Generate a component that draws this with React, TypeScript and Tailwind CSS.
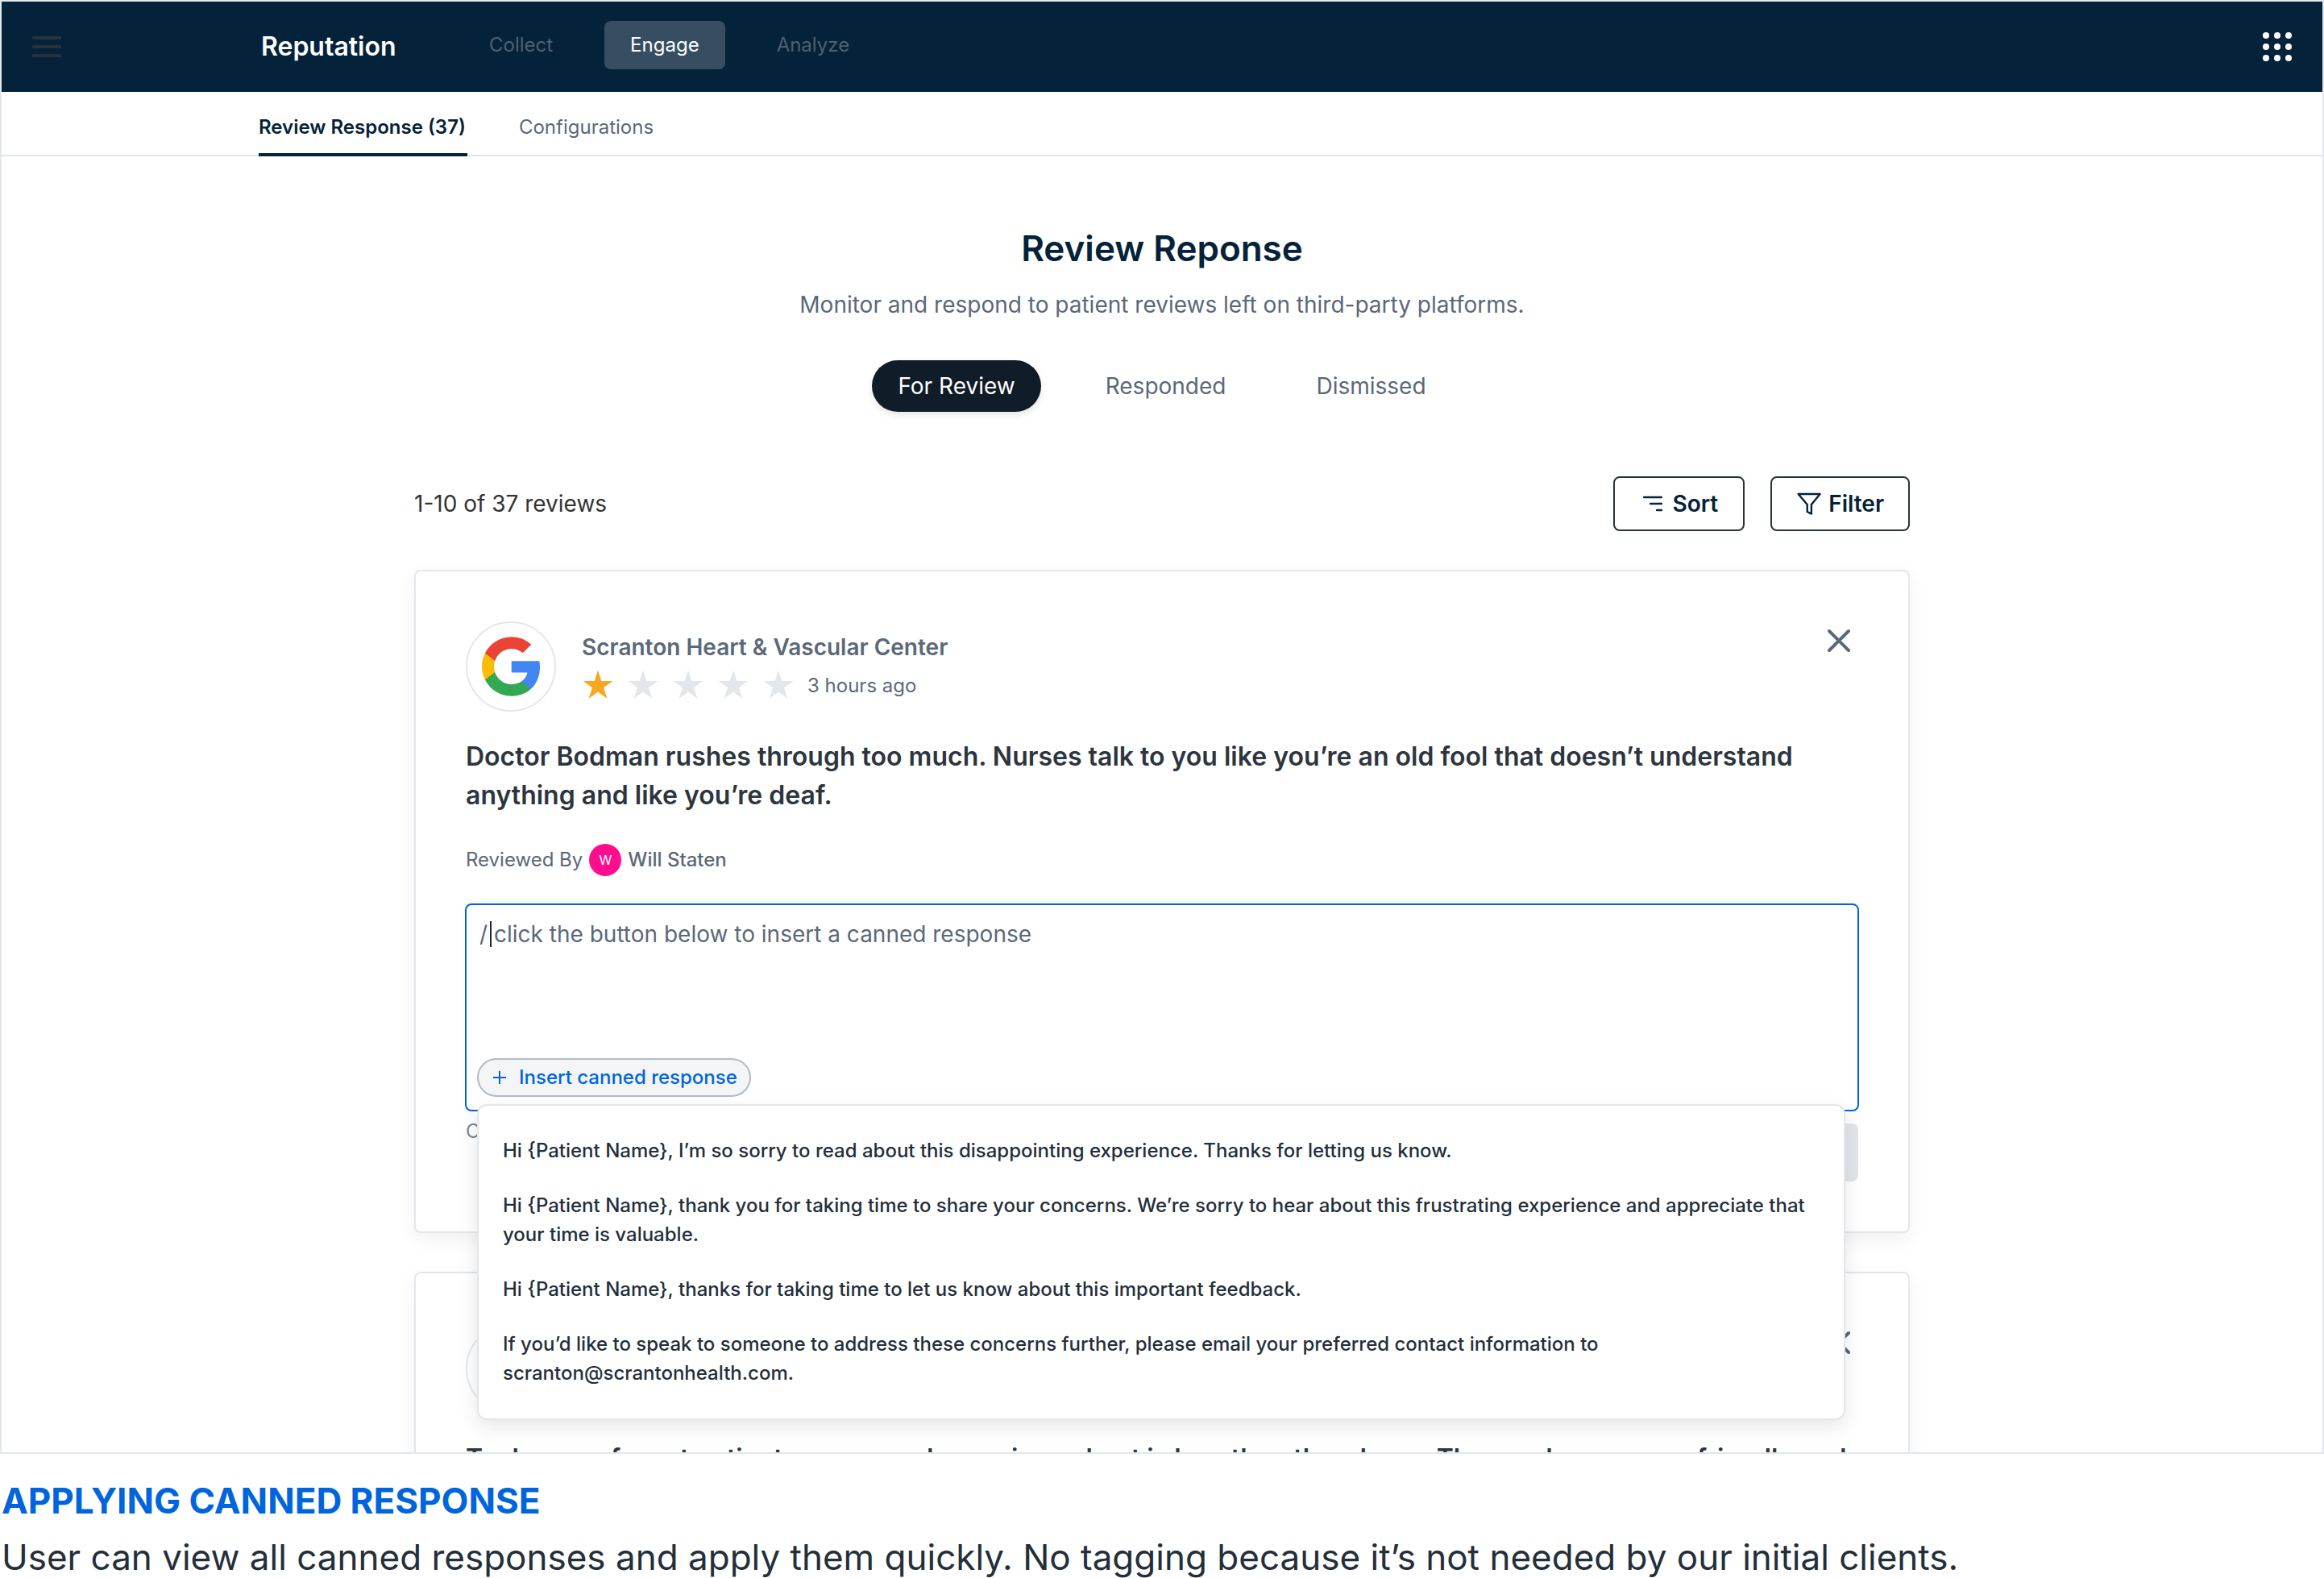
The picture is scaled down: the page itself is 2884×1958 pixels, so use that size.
import React from "react";

const cannedResponses = [
  "Hi {Patient Name}, I’m so sorry to read about this disappointing experience. Thanks for letting us know.",
  "Hi {Patient Name}, thank you for taking time to share your concerns. We’re sorry to hear about this frustrating experience and appreciate that your time is valuable.",
  "Hi {Patient Name}, thanks for taking time to let us know about this important feedback.",
  "If you’d like to speak to someone to address these concerns further, please email your preferred contact information to scranton@scrantonhealth.com.",
];

function Star({ filled }: { filled: boolean }) {
  return (
    <svg viewBox="0 0 40 40" className={filled ? "h-10 w-10 text-[#f6a723]" : "h-10 w-10 text-[#e3e7ec]"} fill="currentColor" aria-hidden="true">
      <polygon points="20,.6 24.36,14 38.45,14 27.05,22.3 31.4,35.7 20,27.4 8.6,35.7 12.95,22.3 1.55,14 15.64,14" />
    </svg>
  );
}

function GoogleLogo() {
  return (
    <svg viewBox="1 1 21.56 22" className="h-[74px] w-[72px]" role="img" aria-label="Google">
      <path fill="#4285f4" d="M22.56 12.25c0-.78-.07-1.53-.2-2.25H12v4.26h5.92c-.26 1.37-1.04 2.53-2.21 3.31v2.77h3.57c2.08-1.92 3.28-4.74 3.28-8.09z" />
      <path fill="#34a853" d="M12 23c2.97 0 5.46-.98 7.28-2.66l-3.57-2.77c-.98.66-2.23 1.06-3.71 1.06-2.86 0-5.29-1.93-6.16-4.53H2.18v2.84C3.99 20.53 7.7 23 12 23z" />
      <path fill="#fbbc05" d="M5.84 14.09c-.22-.66-.35-1.36-.35-2.09s.13-1.43.35-2.09V7.07H2.18C1.43 8.55 1 10.22 1 12s.43 3.45 1.18 4.93l2.85-2.22.81-.62z" />
      <path fill="#ea4335" d="M12 5.38c1.62 0 3.06.56 4.21 1.64l3.15-3.15C17.45 2.09 14.97 1 12 1 7.7 1 3.99 3.47 2.18 7.07l3.66 2.84c.87-2.6 3.3-4.53 6.16-4.53z" />
    </svg>
  );
}

function ReviewCard({ stars, text, children }: { stars: number; text: string; children?: React.ReactNode }) {
  return (
    <article className="mt-12 rounded-lg border-2 border-[#e3e7eb] bg-white p-[62px] shadow-[0_8px_24px_rgba(0,0,0,0.06)]">
      <header className="flex items-start justify-between">
        <div className="flex items-center gap-8">
          <div className="flex h-28 w-28 items-center justify-center rounded-full border-2 border-[#e3e7ec]">
            <GoogleLogo />
          </div>
          <div>
            <h2 className="text-[28px] leading-10 font-semibold text-[#5b6878]">Scranton Heart &amp; Vascular Center</h2>
            <div className="mt-2 flex items-center gap-4">
              {[1, 2, 3, 4, 5].map((n) => (
                <Star key={n} filled={n <= stars} />
              ))}
              <span className="text-2xl leading-10 text-[#5b6878]">3 hours ago</span>
            </div>
          </div>
        </div>
        <button type="button" aria-label="Dismiss review" className="mt-2 mr-2">
          <svg viewBox="0 0 32 32" className="h-8 w-8 text-[#5b6878]" fill="none" stroke="currentColor" strokeWidth="4" strokeLinecap="round">
            <path d="M4 4L28 28M28 4L4 28" />
          </svg>
        </button>
      </header>
      <p className="mt-8 text-[32px] leading-[48px] font-semibold text-[#2d353e]">{text}</p>
      {children}
    </article>
  );
}

export default function App() {
  return (
    <div className="flex h-screen flex-col bg-white font-[Inter,sans-serif]">
      <div className="min-h-0 flex-1 overflow-hidden border-2 border-[#e3e7eb]">
        <header className="flex h-28 items-center bg-[#042239] px-[38px]">
          <button type="button" aria-label="Menu">
            <svg viewBox="0 0 36 36" className="h-9 w-9 text-[#28323c]" fill="currentColor">
              <rect y="5" width="36" height="4" rx="1" />
              <rect y="16" width="36" height="4" rx="1" />
              <rect y="27" width="36" height="4" rx="1" />
            </svg>
          </button>
          <div className="ml-[248px] w-[251px] text-[32px] leading-[48px] font-semibold text-white">Reputation</div>
          <nav className="flex gap-8 self-start pt-6 text-2xl leading-[60px] text-[#4f6072]">
            <a href="#collect" className="px-8">Collect</a>
            <a href="#engage" className="rounded-lg bg-[#374e62] px-8 text-white">Engage</a>
            <a href="#analyze" className="px-8">Analyze</a>
          </nav>
          <button type="button" aria-label="Apps" className="ml-auto">
            <svg viewBox="0 0 36 36" className="h-9 w-9" fill="#fff">
              {[4, 18, 32].map((y) => [4, 18, 32].map((x) => <circle key={`${x}-${y}`} cx={x} cy={y} r="4" />))}
            </svg>
          </button>
        </header>

        <nav className="flex h-20 gap-16 border-b-2 border-[#e3e7eb] pl-[319px] text-2xl">
          <a href="#review-response" className="-mb-0.5 flex items-center border-b-4 border-[#042239] pt-3 pr-0.5 font-semibold text-[#042239]">
            Review Response (37)
          </a>
          <a href="#configurations" className="-mb-0.5 flex items-center border-b-4 border-transparent pt-3 text-[#5b6878]">
            Configurations
          </a>
        </nav>

        <main className="mx-auto w-full max-w-[1856px] pt-[86px]">
          <h1 className="text-center text-[44px] leading-[56px] font-semibold text-[#042239]">Review Reponse</h1>
          <p className="mt-[22px] text-center text-[28px] leading-10 text-[#5b6878]">
            Monitor and respond to patient reviews left on third-party platforms.
          </p>
          <div className="mt-[49px] flex justify-center gap-12 text-[28px] leading-[64px] text-[#5b6878]">
            <button type="button" className="rounded-full bg-[#101c28] px-8 text-white shadow-[0_4px_8px_rgba(0,0,0,0.1)]">For Review</button>
            <button type="button" className="px-8">Responded</button>
            <button type="button" className="px-8">Dismissed</button>
          </div>

          <div className="mt-20 flex items-center justify-between text-[28px] leading-10">
            <span className="text-[#333333]">1-10 of 37 reviews</span>
            <div className="flex gap-8 font-semibold text-[#042239]">
              <button type="button" className="flex h-[68px] items-center gap-2 rounded-lg border-2 border-[#2a333d] px-[31px]">
                <svg viewBox="0 0 32 32" className="h-8 w-8" fill="none" stroke="currentColor" strokeWidth="2.6" strokeLinecap="round">
                  <path d="M5.2 8H26.8M13.2 16H26.8M21.2 24H26.8" />
                </svg>
                Sort
              </button>
              <button type="button" className="flex h-[68px] items-center gap-2 rounded-lg border-2 border-[#2a333d] px-[30px]">
                <svg viewBox="0 0 32 32" className="h-8 w-8" fill="none" stroke="currentColor" strokeWidth="2.4" strokeLinejoin="round">
                  <path d="M2.6 4H29.6L18.9 17V28.6L13.7 26V17Z" />
                </svg>
                Filter
              </button>
            </div>
          </div>

          <ReviewCard
            stars={1}
            text="Doctor Bodman rushes through too much. Nurses talk to you like you’re an old fool that doesn’t understand anything and like you’re deaf."
          >
            <div className="mt-9 flex items-center gap-2 text-2xl leading-10 text-[#5b6878]">
              <span>Reviewed By</span>
              <span className="flex h-10 w-10 items-center justify-center rounded-full bg-[#ff0d8e] text-base text-white">W</span>
              <span className="font-medium">Will Staten</span>
            </div>

            <div className="relative -mx-px mt-[34px] rounded-lg border-2 border-[#0065dd] px-[13px] py-4">
              <textarea
                aria-label="Response"
                defaultValue="/ click the button below to insert a canned response"
                className="block h-[174px] w-full resize-none pl-[3px] text-[28px] leading-10 text-[#5b6878] outline-none"
              />
              <span className="absolute top-5 left-[29px] h-8 w-0.5 bg-[#1c2733]" />
              <button type="button" className="flex h-12 items-center gap-4 rounded-full border-2 border-[#b3bbc5] bg-[#f3f5f7] pr-[15px] pl-[18px] text-2xl font-medium text-[#0065dd]">
                <svg viewBox="0 0 16 16" className="h-4 w-4" fill="none" stroke="currentColor" strokeWidth="2">
                  <path d="M0 8H16M8 0V16" />
                </svg>
                Insert canned response
              </button>

              <div className="absolute top-[247px] right-[15px] left-[13px] z-10 flex flex-col gap-8 rounded-xl border-2 border-[#e3e7eb] bg-white px-[30px] py-[38px] shadow-[0_8px_24px_rgba(0,0,0,0.1)]">
                {cannedResponses.map((response) => (
                  <button key={response} type="button" className="text-left text-2xl leading-9 font-medium text-[#232f3b]">
                    {response}
                  </button>
                ))}
              </div>
            </div>

            <div className="mt-[15px] flex items-start justify-between text-2xl leading-5 text-[#7a8795]">
              <span>Characters</span>
              <button type="button" disabled className="h-[72px] rounded-lg bg-[#e2e6eb] px-8">Send</button>
            </div>
          </ReviewCard>

          <ReviewCard
            stars={4}
            text="Took care of most patient comes, and experience best is less the other doors. They and our crews, friendly and easy to reach."
          />
        </main>
      </div>

      <footer className="h-[154px] shrink-0 pt-7 pl-0.5 text-[44px]">
        <h2 className="leading-[60px] font-bold text-[#0065dd]">APPLYING CANNED RESPONSE</h2>
        <p className="mt-[14px] leading-[52px] text-[#232f3b]">
          User can view all canned responses and apply them quickly. No tagging because it’s not needed by our initial clients.
        </p>
      </footer>
    </div>
  );
}
